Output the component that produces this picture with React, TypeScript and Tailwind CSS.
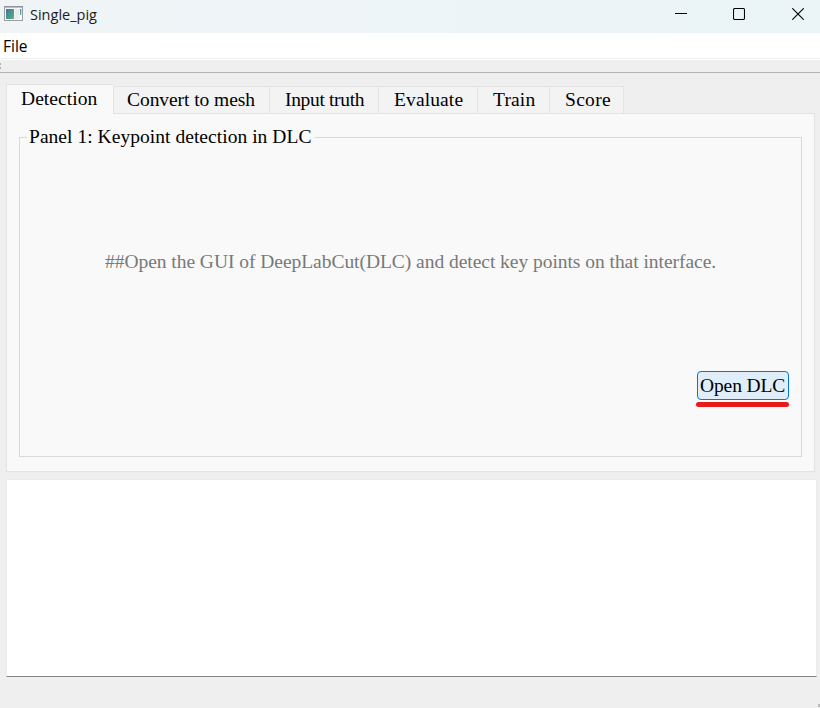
import React from "react";

type Tab = { label: string; width: string; text: string };

const tabs: Tab[] = [
  { label: "Convert to mesh", width: "w-[156px]", text: "pl-[13px] tracking-[-0.06px]" },
  { label: "Input truth", width: "w-[109px]", text: "pl-[15px] tracking-[-0.34px]" },
  { label: "Evaluate", width: "w-[99px]", text: "pl-[15px] tracking-[0.12px]" },
  { label: "Train", width: "w-[72px]", text: "pl-[15px] tracking-[0.15px]" },
  { label: "Score", width: "w-[74px]", text: "pl-[15px] tracking-[0.3px]" },
];

function AppIcon() {
  return (
    <svg width="20" height="16" viewBox="0 0 20 16" className="shrink-0">
      <defs>
        <linearGradient id="pane" x1="0" y1="0" x2="1" y2="1">
          <stop offset="0" stopColor="#3d78a0" />
          <stop offset="1" stopColor="#5db07c" />
        </linearGradient>
        <linearGradient id="bar" x1="0" y1="0" x2="0" y2="1">
          <stop offset="0" stopColor="#3f7fd0" />
          <stop offset="1" stopColor="#6cc08c" />
        </linearGradient>
      </defs>
      <rect x="0.5" y="0.5" width="18" height="14" fill="#f6f7f7" stroke="#9b9fa3" />
      <rect x="0" y="0" width="19" height="1.6" fill="#92979c" />
      <rect x="2" y="3" width="8" height="10" fill="url(#pane)" />
      <rect x="11" y="3" width="4" height="10" fill="#ececec" />
      <rect x="16" y="3" width="1.3" height="6" fill="url(#bar)" />
    </svg>
  );
}

function TitleBar() {
  return (
    <header className="flex h-[33px] items-start bg-gradient-to-r from-[#f0f4f7] to-[#ebf4f7]">
      <div className="flex grow pl-1">
        <div className="pt-[6px]">
          <AppIcon />
        </div>
        <span className="ml-[6px] pt-[5px] font-['Open_Sans','Noto_Sans',sans-serif] text-[14.5px] leading-5 text-[#1c1c1c]">
          Single_pig
        </span>
      </div>
      <div className="flex pt-2 pr-4">
        <svg width="12" height="12" viewBox="0 0 12 12">
          <path d="M0 5.5H12" stroke="#000" />
        </svg>
        <svg className="mr-[47px] ml-[46px]" width="12" height="12" viewBox="0 0 12 12">
          <rect x="0.5" y="0.5" width="11" height="11" rx="1.3" fill="none" stroke="#000" strokeWidth="1.1" />
        </svg>
        <svg width="12" height="12" viewBox="0 0 12 12">
          <path d="M0.3 0.3L11.7 11.7M11.7 0.3L0.3 11.7" stroke="#000" strokeWidth="1.1" />
        </svg>
      </div>
    </header>
  );
}

export default function App() {
  return (
    <div className="flex h-[708px] w-[820px] flex-col overflow-hidden bg-[#efefef] font-['Liberation_Serif',serif] text-[19.5px] whitespace-nowrap text-black">
      <TitleBar />
      <nav className="h-[25px] bg-white pl-[3px] font-['Open_Sans','Noto_Sans',sans-serif] text-[15.5px] leading-[27px]">File</nav>
      <div className="h-[2px] border-t border-[#f0f0f0] bg-white" />
      <div className="flex h-[13px] flex-col gap-[2px] border-b border-[#b4b4b4] pt-[3px]">
        <i className="block h-[2px] w-px bg-[#b0b0b0]" />
        <i className="block h-[2px] w-px bg-[#b0b0b0]" />
      </div>

      <div className="z-10 mt-[11px] -mb-px ml-[6px] flex h-[30px] items-end">
        <button className="flex h-[30px] w-[107px] items-start border-t border-l border-[#e3e3e3] bg-[#f9f9f9] pl-[14px] leading-[27px] tracking-[0.05px]">
          Detection
        </button>
        <div className="flex border-l border-[#e3e3e3]">
          {tabs.map((t) => (
            <button
              key={t.label}
              className={`flex h-[28px] items-start border-y border-r border-[#e3e3e3] bg-[#f3f3f3] leading-[25px] ${t.width} ${t.text}`}
            >
              {t.label}
            </button>
          ))}
        </div>
      </div>

      <main className="ml-[6px] h-[359px] w-[809px] border border-[#e3e3e3] bg-[#f9f9f9] px-3 pt-3">
        <section className="flex h-[331px] w-[783px] flex-col">
          <div className="flex h-3 items-end">
            <span className="h-px w-2 bg-[#d9d9d9]" />
            <h1 className="h-3 w-[288px] pl-[2px] leading-[22px] tracking-[0.04px]">Panel 1: Keypoint detection in DLC</h1>
            <span className="h-px grow bg-[#d9d9d9]" />
          </div>
          <div className="flex grow flex-col border-x border-b border-[#d9d9d9]">
            <p className="mt-[112px] pl-[85px] leading-6 tracking-[-0.04px] text-[#787878]">
              ##Open the GUI of DeepLabCut(DLC) and detect key points on that interface.
            </p>
            <div className="mt-[97px] mr-3 flex flex-col items-end">
              <button className="h-[29px] w-[92px] rounded-[4px] border border-[#0078d4] bg-[#e0eef9] pl-[2px] text-left leading-[28px] tracking-[-0.12px]">
                Open DLC
              </button>
              <span className="mt-[1.5px] h-[5px] w-[93px] rounded-full bg-[#e81a1c]" />
            </div>
          </div>
        </section>
      </main>

      <div className="mt-[7px] ml-[6px] h-[198px] w-[811px] border border-b-[#858585] border-[#ebebeb] bg-white" />
      <div className="flex grow items-end justify-end">
        <i className="mb-px block h-[3px] w-[2px] bg-[#bcbcbc]" />
      </div>
    </div>
  );
}
